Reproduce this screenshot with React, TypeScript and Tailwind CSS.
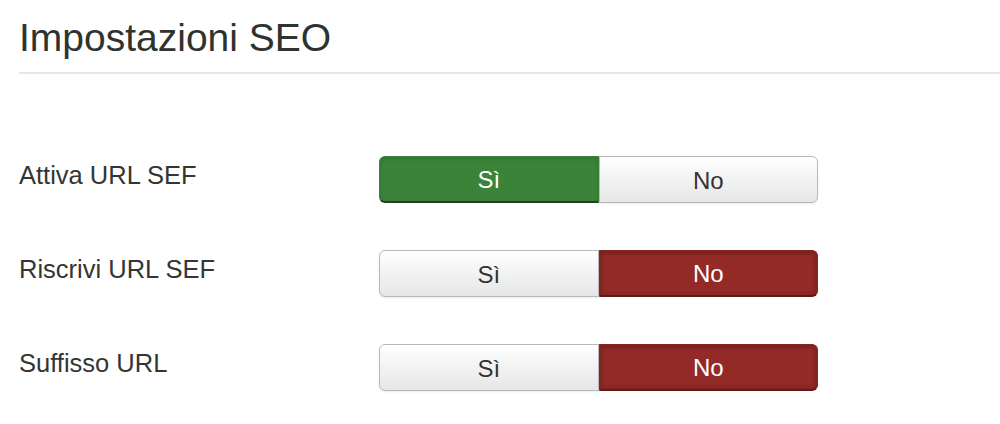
import React from "react";

type Row = { label: string; value: "yes" | "no" };

const rows: Row[] = [
  { label: "Attiva URL SEF", value: "yes" },
  { label: "Riscrivi URL SEF", value: "no" },
  { label: "Suffisso URL", value: "no" },
];

function Toggle({ value }: { value: "yes" | "no" }) {
  const inactive =
    "bg-gradient-to-b from-[#ffffff] to-[#e6e6e6] text-[#333333] border border-[#b9b9b9] shadow-[0_1px_2px_rgba(0,0,0,0.08)]";
  const yesActive =
    "bg-[#3a8339] text-white border border-[#3a8339] border-b-[#2b3a2b] border-b-2 shadow-[inset_0_2px_4px_rgba(0,0,0,0.12)]";
  const noActive =
    "bg-[#942a27] text-white border border-[#862522] border-b-[#5e1a18] border-b-2 shadow-[inset_0_0_0_4px_rgba(0,0,0,0.06),inset_0_2px_4px_rgba(0,0,0,0.15)]";
  return (
    <div className="flex h-[47px] w-[439px]">
      <div
        className={`flex flex-1 items-center justify-center rounded-l-[6px] pt-[2px] text-[24px] ${
          value === "yes" ? yesActive : inactive
        }`}
      >
        Sì
      </div>
      <div
        className={`flex flex-1 items-center justify-center rounded-r-[6px] pt-[2px] text-[24px] ${
          value === "no" ? noActive : inactive
        }`}
      >
        No
      </div>
    </div>
  );
}

export default function App() {
  return (
    <div
      className="h-[424px] w-[1000px] bg-white pl-[19px] text-[#333633]"
      style={{ fontFamily: '"Liberation Sans", Arial, Helvetica, sans-serif' }}
    >
      <div className="pt-[14px]">
        <h1 className="pb-[10px] text-[39px] font-normal leading-[48px] text-[#2f332f]">
          Impostazioni SEO
        </h1>
        <div className="h-[2px] bg-[#e6e6e6]" />
      </div>
      <div className="flex flex-col gap-[47px] pt-[82px]">
        {rows.map((r) => (
          <div key={r.label} className="flex items-start">
            <div className="w-[360px] text-[25.5px] leading-[38px] text-[#333633]">
              {r.label}
            </div>
            <Toggle value={r.value} />
          </div>
        ))}
      </div>
    </div>
  );
}
